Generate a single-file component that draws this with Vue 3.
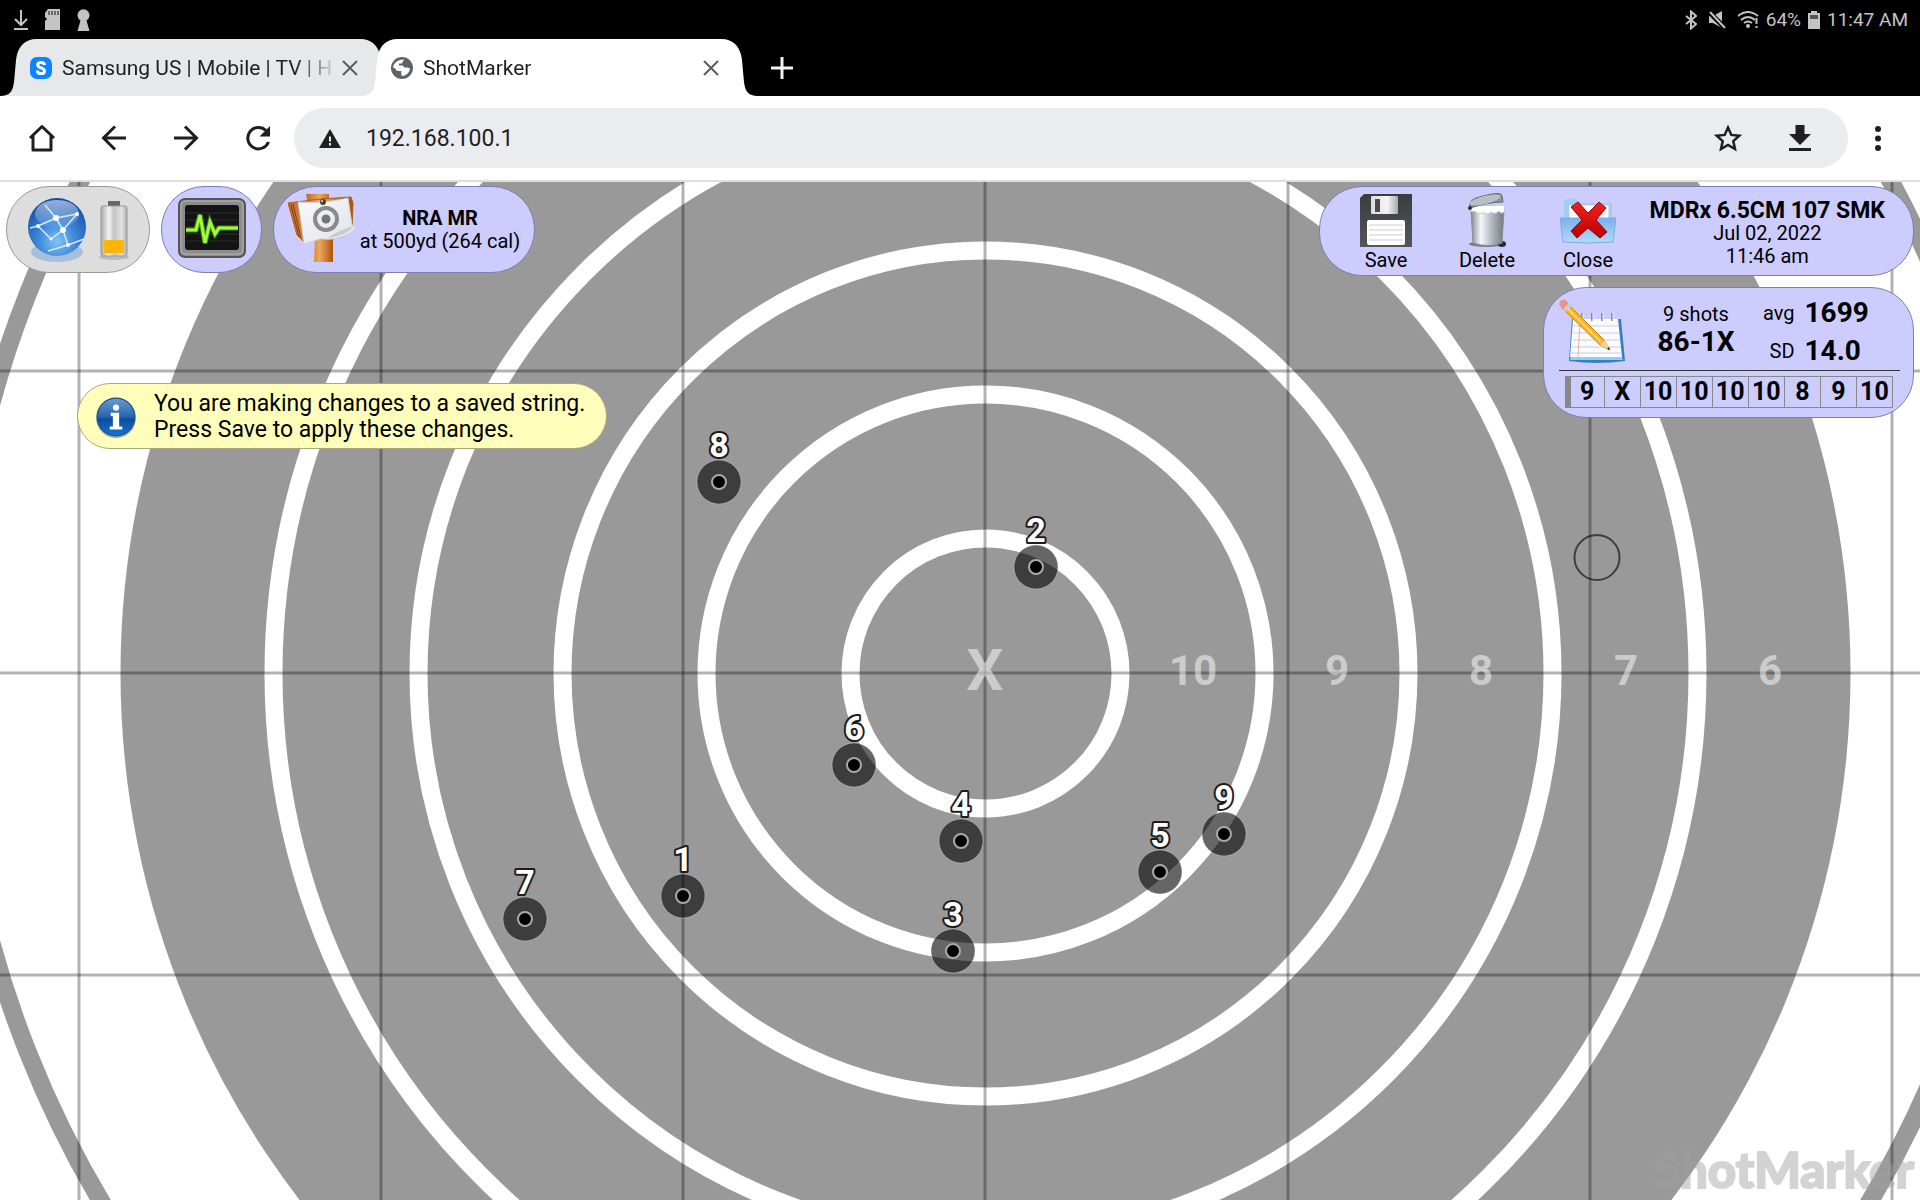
<script setup>
const tabs = [
  { title: 'Samsung US | Mobile | TV | H', icon: 'samsung', active: false },
  { title: 'ShotMarker', icon: 'globe', active: true },
]

const ringRadii = [135, 279, 423, 567, 712]
const ringLabels = [
  { text: '10', x: 1193 },
  { text: '9', x: 1337 },
  { text: '8', x: 1481 },
  { text: '7', x: 1626 },
  { text: '6', x: 1770 },
]
const gridX = [79, 381, 683, 985, 1288, 1590, 1892]
const gridY = [189, 491, 793]

const shots = [
  { n: 1, x: 683, y: 714 },
  { n: 2, x: 1036, y: 385 },
  { n: 3, x: 953, y: 769 },
  { n: 4, x: 961, y: 659 },
  { n: 5, x: 1160, y: 690 },
  { n: 6, x: 854, y: 583 },
  { n: 7, x: 525, y: 737 },
  { n: 8, x: 719, y: 300 },
  { n: 9, x: 1224, y: 652 },
]
const scores = ['9', 'X', '10', '10', '10', '10', '8', '9', '10']
</script>

<template>
  <div class="device">
    <header class="status">
      <div class="status-side">
        <svg width="14" height="22" viewBox="0 0 14 22" fill="none" stroke="#c4c4c4" stroke-width="2"><path d="M7 1v15M1 10l6 6 6-6M0 20h14" /></svg>
        <svg width="15" height="22" viewBox="0 0 15 22"><path d="M3 0h12v21H0v-9l2-2-2-2V4z" fill="#c4c4c4" /><path d="M4 2v4M7 2v4M10 2v4M13 2v4" stroke="#111" stroke-width="1" /></svg>
        <svg width="13" height="22" viewBox="0 0 13 22"><path d="M3.500 11.500A6 6 0 1 1 9.500 11.500L12.500 22H.500z" fill="#c4c4c4" /></svg>
      </div>
      <div class="status-side right">
        <svg width="12" height="20" viewBox="0 0 12 20" fill="none" stroke="#c4c4c4" stroke-width="2"><path d="M1 6l10 8-5 4.500V1.500L11 6 1 14" /></svg>
        <svg width="17" height="18" viewBox="0 0 17 18"><path d="M0 5h4l9-5v17l-9-5H0z" fill="#c4c4c4" /><path d="M0 1l16 16" stroke="#000" stroke-width="5" /><path d="M1 1l15 16" stroke="#c4c4c4" stroke-width="2" /></svg>
        <svg width="21" height="18" viewBox="0 0 21 18" fill="none" stroke="#c4c4c4" stroke-width="2"><path d="M0 5Q10-3 20 5M3 9q7-6 14 0M6 12q4-3 8 0" /><circle cx="10" cy="15" r="1" fill="#c4c4c4" /><path d="M18.500 7v6M18.500 15v2" /></svg>
        <span>64%</span>
        <svg width="12" height="18" viewBox="0 0 12 18"><path d="M3 0h6v2h3v16H0V2h3z" fill="#c4c4c4" /><path d="M2 4h8v4H2z" fill="#555" /></svg>
        <span>11:47 AM</span>
      </div>
    </header>

    <nav class="tabs" aria-label="Open tabs">
      <div v-for="tab in tabs" :key="tab.title" class="tab" :class="{ active: tab.active }">
        <svg class="tab-shape" viewBox="0 0 394 57" preserveAspectRatio="none" aria-hidden="true"><path d="M0 57C10 57 13 52 14 42L16 20C18 6 26 0 36 0H358C368 0 376 6 378 20L380 42C381 52 384 57 394 57Z" /></svg>
        <svg v-if="tab.icon === 'samsung'" class="favicon" viewBox="0 0 22 22"><rect width="22" height="22" rx="7" fill="#0a84ff" /><path d="M14.500 8.200C14.300 5.900 13 5.400 11 5.400S7.700 6.300 7.700 8c0 3.500 6.800 2.200 6.800 5.900 0 1.800-1.500 2.700-3.500 2.700s-3.600-.700-3.600-3.200" fill="none" stroke="#fff" stroke-width="3" /></svg>
        <svg v-else class="favicon" viewBox="0 0 22 22"><circle cx="11" cy="11" r="11" fill="#5f6368" /><path d="M13 2.500c1 2-2 2-2 4H8v2c2 0 5-.500 5 2h3.500c1 0 2.500 1 2.500 1.500-1 4-4 7-8.500 7 .500-3-1-3 0-5H7c-2 0-2-3-5-3.500C2.500 6 7 2 13 2.500z" fill="#fff" /><path d="M13 2l-1 3 4 0 1 4h3l-2-5z" fill="#5f6368" /></svg>
        <a href="#" class="tab-title">{{ tab.title }}</a>
        <button class="plain" :aria-label="'Close ' + tab.title"><svg width="16" height="16" viewBox="0 0 16 16" fill="none" stroke="#5a5c5f" stroke-width="2"><path d="M1 1l14 14M15 1L1 15" /></svg></button>
      </div>
      <button class="plain new-tab" aria-label="New tab"><svg width="22" height="22" viewBox="0 0 22 22" stroke="#f1f3ee" stroke-width="3"><path d="M11 0v22M0 11h22" /></svg></button>
    </nav>

    <div class="toolbar">
      <button class="plain tool" aria-label="Home"><svg width="28" height="28" viewBox="0 0 28 28" fill="none" stroke="#1f1f1f" stroke-width="3"><path d="M2 14L14 2.500 26 14M5 12v14h18V12" stroke-linejoin="round" /></svg></button>
      <button class="plain tool" aria-label="Back"><svg width="26" height="26" viewBox="0 0 26 26" fill="none" stroke="#1f1f1f" stroke-width="3"><path d="M25 13H3M14 1.500L2.500 13 14 24.500" /></svg></button>
      <button class="plain tool" aria-label="Forward"><svg width="26" height="26" viewBox="0 0 26 26" fill="none" stroke="#1f1f1f" stroke-width="3"><path d="M1 13h22M12 1.500L23.500 13 12 24.500" /></svg></button>
      <button class="plain tool" aria-label="Reload"><svg width="26" height="26" viewBox="0 0 26 26"><path d="M21 5.500A10.700 10.700 0 1 0 23.500 17" fill="none" stroke="#1f1f1f" stroke-width="3" /><path d="M25 1v10.500H14.500z" fill="#1f1f1f" /></svg></button>
      <div class="omnibox">
        <svg width="22" height="19" viewBox="0 0 22 19"><path d="M11 0l11 19H0z" fill="#1f1f1f" /><path d="M11 7.500v5M11 14v2.500" stroke="#ebecf0" stroke-width="2" /></svg>
        <input type="text" value="192.168.100.1" aria-label="Address" />
        <button class="plain tool" aria-label="Bookmark"><svg width="30" height="28" viewBox="0 0 30 28"><path d="M15 3.500l3.300 7.400 8 .800-6 5.400 1.700 7.900L15 21l-7 4 1.700-7.900-6-5.400 8-.800z" fill="none" stroke="#1f1f1f" stroke-width="2.500" /></svg></button>
        <button class="plain tool" aria-label="Downloads"><svg width="22" height="26" viewBox="0 0 22 26"><path d="M6.500 0h9v9H22L11 20 0 9h6.500zM0 23h22v3H0z" fill="#1f1f1f" /></svg></button>
      </div>
      <button class="plain menu" aria-label="Menu"><svg width="6" height="25" viewBox="0 0 6 25" fill="#1f1f1f"><circle cx="3" cy="3" r="3" /><circle cx="3" cy="12.500" r="3" /><circle cx="3" cy="22" r="3" /></svg></button>
    </div>

    <main class="range">
      <svg class="target" viewBox="0 0 1920 1018" preserveAspectRatio="xMidYMid slice">
        <circle cx="985.500" cy="491" r="1030" fill="none" stroke="#999" stroke-width="18" />
        <circle cx="985.500" cy="491" r="865" fill="#999" />
        <circle v-for="r in ringRadii" :key="r" cx="985.500" cy="491.500" :r="r" fill="none" stroke="#fff" stroke-width="18" />
        <g stroke="#000" stroke-opacity=".3" stroke-width="3">
          <path v-for="x in gridX" :key="x" :d="`M${x} 0V1018`" />
          <path v-for="y in gridY" :key="y" :d="`M0 ${y}H1920`" />
        </g>
        <g class="ring-labels">
          <text class="center-label" x="985" y="508">X</text>
          <text v-for="l in ringLabels" :key="l.text" :x="l.x" y="503">{{ l.text }}</text>
        </g>
        <circle cx="1597" cy="375.500" r="22.500" fill="none" stroke="#000" stroke-opacity=".6" stroke-width="2" />
        <g v-for="s in shots" :key="s.n">
          <circle :cx="s.x" :cy="s.y" r="22" fill="#000" fill-opacity=".6" stroke="#fff" stroke-opacity=".3" />
          <circle :cx="s.x" :cy="s.y" r="7" fill="#000" stroke="#aaa" stroke-width="2" />
          <text class="shot-number" :x="s.x" :y="s.y - 25">{{ s.n }}</text>
        </g>
        <text class="watermark" x="1914" y="1006">ShotMarker</text>
      </svg>

      <div class="hud">
        <div class="hud-left">
          <div class="pills">
            <button class="pill connection" aria-label="Connection">
              <svg width="60" height="66" viewBox="0 0 60 66">
                <defs>
                  <radialGradient id="orb" cx=".5" cy=".75" r=".75"><stop offset="0" stop-color="#7fc4f5" /><stop offset=".45" stop-color="#3b86d8" /><stop offset="1" stop-color="#1348a4" /></radialGradient>
                  <linearGradient id="orbShine" x1="0" y1="0" x2="0" y2="1"><stop offset="0" stop-color="#fff" stop-opacity=".55" /><stop offset="1" stop-color="#fff" stop-opacity=".05" /></linearGradient>
                </defs>
                <ellipse cx="30" cy="55" rx="26" ry="10" fill="#8fb2d8" opacity=".7" />
                <circle cx="30" cy="30" r="29" fill="url(#orb)" />
                <ellipse cx="30" cy="17" rx="22" ry="14" fill="url(#orbShine)" />
                <g fill="none" stroke="#e2f2ff" stroke-width="1.500" opacity=".9"><path d="M3 31L11 29 29 21 50 17M29 21L36 33 41 48 21 54M18 8l11 13M36 33L24 42M36 33L50 17M41 48L57 42M11 29l13 13" /></g>
                <g fill="#fff"><circle cx="29" cy="21" r="3" /><circle cx="36" cy="33" r="3" /><circle cx="11" cy="29" r="2" /><circle cx="50" cy="17" r="2" /><circle cx="41" cy="48" r="2" /><circle cx="24" cy="42" r="1.500" /></g>
              </svg>
              <svg width="30" height="60" viewBox="0 0 30 60">
                <defs><linearGradient id="cell"><stop offset="0" stop-color="#aaa" /><stop offset=".3" stop-color="#f2f2f2" /><stop offset=".5" stop-color="#c3c3c3" /><stop offset=".8" stop-color="#e2e2e2" /><stop offset="1" stop-color="#aaa" /></linearGradient></defs>
                <ellipse cx="15" cy="57" rx="15" ry="3" fill="#bbb" />
                <rect x="9" y="1" width="12" height="6" fill="#666" />
                <rect x="2" y="6" width="26" height="50" rx="2" fill="url(#cell)" stroke="#999" />
                <rect x="5" y="40" width="20" height="13" fill="#fdb605" />
              </svg>
            </button>
            <button class="pill monitor" aria-label="Monitor">
              <svg width="68" height="64" viewBox="0 0 68 64">
                <rect x="1" y="1" width="66" height="58" rx="6" fill="#8d8d8d" stroke="#555" stroke-width="2" />
                <rect x="3" y="3" width="62" height="53" rx="4" fill="none" stroke="#b5b5b5" stroke-width="1" />
                <rect x="7" y="7" width="54" height="45" rx="3" fill="#141414" />
                <path d="M8 15h52M8 22h52M8 29h52M8 36h52M8 43h52" stroke="#2c2c2c" />
                <path d="M8 32h10l4-15 5 28 5-21 5 12 4-6h19" fill="none" stroke="#3e8c16" stroke-width="5" />
                <path d="M8 32h10l4-15 5 28 5-21 5 12 4-6h19" fill="none" stroke="#a6f83e" stroke-width="3" />
              </svg>
            </button>
            <button class="pill face">
              <svg width="68" height="72" viewBox="0 0 68 72">
                <defs>
                  <linearGradient id="wood"><stop offset="0" stop-color="#bd6a24" /><stop offset=".5" stop-color="#eba85c" /><stop offset="1" stop-color="#a9520f" /></linearGradient>
                  <linearGradient id="sheet" x1="0" y1="0" x2="1" y2="1"><stop offset="0" stop-color="#fafafa" /><stop offset=".8" stop-color="#e4e7ec" /><stop offset="1" stop-color="#fff" /></linearGradient>
                </defs>
                <path d="M18 0h23v10H20zM27 42h18v26H26z" fill="url(#wood)" />
                <path d="M0 9l33-4 30-2 2 6-1 28-10 6-39 4-6-6z" fill="url(#wood)" stroke="#ae5c1b" />
                <path d="M3 11l8 32M5 10l8 34" stroke="#8a3d0a" fill="none" />
                <path d="M10 8q24 2 50-4l4 27q5 2 2 5-12 11-34 9l-16 5q-3-24-6-42z" fill="url(#sheet)" stroke="#cdd1d6" />
                <path d="M39 44q14-9 27-12-8 10-27 12z" fill="#c8ccd2" />
                <circle cx="38" cy="25" r="11" fill="none" stroke="#8a8a8a" stroke-width="4" /><circle cx="38" cy="25" r="4.500" fill="#777" />
                <circle cx="35" cy="8" r="3" fill="#444" /><circle cx="34" cy="7" r="1" fill="#ddd" />
              </svg>
              <span class="lines"><strong>NRA MR</strong><span>at 500yd (264 cal)</span></span>
            </button>
          </div>
          <p class="notice" role="status">
            <svg width="40" height="42" viewBox="0 0 38 40">
              <defs><linearGradient id="info" x1="0" y1="0" x2="0" y2="1"><stop offset="0" stop-color="#6d9bd0" /><stop offset=".5" stop-color="#2664ac" /><stop offset=".55" stop-color="#0b4d9e" /><stop offset="1" stop-color="#1873cf" /></linearGradient></defs>
              <circle cx="19" cy="21" r="19" fill="#687d9b" opacity=".6" /><circle cx="19" cy="20" r="18" fill="url(#info)" stroke="#174b8c" />
              <circle cx="19" cy="11" r="3" fill="#fff" /><path d="M14 16h8v13h3v3H13v-3h3V19h-2z" fill="#fff" />
            </svg>
            <span>You are making changes to a saved string.<br />Press Save to apply these changes.</span>
          </p>
        </div>

        <div class="hud-right">
          <section class="pill session">
            <button class="plain action">
              <svg width="52" height="53" viewBox="0 0 52 53">
                <defs>
                  <linearGradient id="disk" x1="0" y1="0" x2="0" y2="1"><stop offset="0" stop-color="#3b3c3f" /><stop offset="1" stop-color="#55565a" /></linearGradient>
                  <linearGradient id="shutter"><stop offset="0" stop-color="#ddd" /><stop offset=".6" stop-color="#f5f5f5" /><stop offset="1" stop-color="#aaa" /></linearGradient>
                </defs>
                <path d="M4 0h48v53H0V4z" fill="url(#disk)" /><rect x="11" y="2" width="27" height="18" rx="1" fill="url(#shutter)" /><rect x="15" y="5" width="5" height="13" fill="#4a4a4d" />
                <rect x="7" y="26" width="38" height="25" rx="2" fill="#fff" /><path d="M9 31h34M9 36h34M9 41h34M9 46h34" stroke="#ccc" />
              </svg>
              Save
            </button>
            <button class="plain action">
              <svg width="40" height="54" viewBox="0 0 40 54">
                <defs><linearGradient id="can"><stop offset="0" stop-color="#84888f" /><stop offset=".3" stop-color="#f5f7fa" /><stop offset=".55" stop-color="#c2c7ce" /><stop offset="1" stop-color="#73777f" /></linearGradient></defs>
                <ellipse cx="20" cy="51" rx="18" ry="3" fill="#777b8b" /><ellipse cx="35" cy="51" rx="4" ry="3" fill="#272a30" />
                <path d="M4 17h33l-2 33q-14 5-29 0z" fill="url(#can)" stroke="#888c94" />
                <path d="M4 13l33-1 1 6q-4 4-6 0-4 4-8 1-4 4-8 0-4 4-8-1-4 2-5-2z" fill="#fff" stroke="#c5c8cd" />
                <path d="M3 15Q0 6 16 3q19-5 19 0l1 6Q22 9 3 15z" fill="#8b949c" stroke="#60686f" /><ellipse cx="18" cy="7" rx="16" ry="4" fill="#b7bfc5" transform="rotate(-14 18 7)" />
                <circle cx="3" cy="15" r="2" fill="#333" />
              </svg>
              Delete
            </button>
            <button class="plain action">
              <svg width="56" height="46" viewBox="0 0 56 46">
                <defs><linearGradient id="folder" x1="0" y1="0" x2="0" y2="1"><stop offset="0" stop-color="#7bb0ed" /><stop offset="1" stop-color="#b5dafb" /></linearGradient><linearGradient id="cross" x1="0" y1="0" x2="0" y2="1"><stop offset="0" stop-color="#f32020" /><stop offset="1" stop-color="#bb0000" /></linearGradient></defs>
                <path d="M4 2q6-3 14 0l3 3h31v37H4z" fill="#a1ccf5" /><path d="M9 7h40v20H9z" fill="#fff" stroke="#bac9db" />
                <path d="M0 20h56l-3 24q-24 2-50 0z" fill="url(#folder)" stroke="#7eade1" />
                <path d="M18 4l10 11L39 4l7 6-10 12 11 12-7 6-12-10-11 10-6-7 11-11L11 9z" fill="url(#cross)" stroke="#8a0c0c" />
              </svg>
              Close
            </button>
            <div class="lines session-text">
              <strong class="name">MDRx 6.5CM 107 SMK</strong><span>Jul 02, 2022</span><span>11:46 am</span>
            </div>
          </section>

          <section class="pill stats">
            <div class="stats-top">
              <svg width="66" height="66" viewBox="0 0 66 66">
                <path d="M13 20h49l4 42q-28 4-56 0z" fill="#377fc0" /><path d="M12 58h51l1 3H11z" fill="#8cd0f4" /><path d="M14 20h45l4 38H11z" fill="#fbfcff" />
                <path d="M15 27h45M14 34h47M14 41h47M13 48h49M12 54h51" stroke="#c5ccdc" /><path d="M21 22l-2 36" stroke="#f0a9aa" />
                <g stroke="#888b99" stroke-width="2"><path d="M23 14v8M33 14v8M43 14v8M53 14v8" /></g><g stroke="#eee"><path d="M24 14v8M34 14v8M44 14v8M54 14v8" /></g>
                <path d="M7 3l38 38 6 10-10-5L2 8z" fill="#fbb020" stroke="#d38a12" /><path d="M6 7l36 36" stroke="#ffd568" stroke-width="2" /><path d="M0 5q2-6 7-4l3 4-6 6z" fill="#ee9187" /><path d="M4 10l6-6 3 3-6 6z" fill="#ccc" /><path d="M41 46l5-5 5 10z" fill="#edd3a2" /><path d="M48 50l2-2 1 3z" fill="#222" />
              </svg>
              <div class="tally"><span>9 shots</span><strong>86-1X</strong></div>
              <dl class="figures"><dt>avg</dt><dd>1699</dd><dt>SD</dt><dd>14.0</dd></dl>
            </div>
            <table class="scores" aria-label="Scores"><tbody><tr><td v-for="(s, i) in scores" :key="i">{{ s }}</td></tr></tbody></table>
          </section>
        </div>
      </div>
    </main>
  </div>
</template>

<style>
body { margin: 0; background: #fff; }
</style>

<style scoped>
.device { display: flex; flex-direction: column; min-height: 100vh; font-family: Roboto, "Liberation Sans", sans-serif; color: #000; white-space: nowrap; }
svg { flex: none; }
.plain { border: 0; padding: 0; background: none; font: inherit; color: inherit; display: flex; align-items: center; justify-content: center; }

.status { height: 39px; background: #000; color: #c4c4c4; display: flex; justify-content: space-between; padding: 0 12px 0 14px; font-size: 19px; }
.status-side { display: flex; align-items: center; gap: 17px; }
.status-side.right { gap: 7px; }
.status-side.right svg:nth-child(-n+2) { margin-right: 5px; }

.tabs { display: flex; height: 57px; background: #000; }
.tab { position: relative; box-sizing: border-box; width: 397px; padding: 0 39px 0 30px; display: flex; align-items: center; }
.tab + .tab { margin-left: -36px; }
.tab-shape { position: absolute; inset: 0; width: 100%; height: 100%; fill: #e7e8ea; }
.tab.active .tab-shape { fill: #fff; }
.favicon { position: relative; width: 22px; height: 22px; }
.tab-title { position: relative; flex: 1; min-width: 0; margin: 0 4px 0 10px; color: #1f1f1f; font-size: 21px; line-height: 28px; text-decoration: none; -webkit-mask-image: linear-gradient(to right, #000 84%, transparent); mask-image: linear-gradient(to right, #000 84%, transparent); }
.tab .plain { position: relative; }
.new-tab { width: 48px; }

.toolbar { display: flex; align-items: center; height: 84px; padding: 0 18px 0 6px; border-bottom: 2px solid #dedede; background: #fff; }
.tool { width: 72px; height: 60px; flex: none; }
.omnibox { flex: 1; display: flex; align-items: center; height: 60px; padding: 0 12px 0 25px; border-radius: 30px; background: #ebecf0; }
.omnibox input { flex: 1; min-width: 0; margin-left: 25px; border: 0; padding: 0; background: none; outline: 0; font: 23px Roboto, "Liberation Sans", sans-serif; color: #1f1f1f; }
.menu { width: 48px; height: 60px; margin-left: 6px; }

.range { position: relative; flex: 1; overflow: hidden; }
.target { position: absolute; inset: 0; width: 100%; height: 100%; }
.ring-labels { fill: #fff; fill-opacity: .5; font-size: 42px; font-weight: 700; text-anchor: middle; }
.center-label { font-size: 58px; }
.shot-number { fill: #fff; stroke: #1c1c1c; stroke-width: 4px; paint-order: stroke; stroke-linejoin: round; font-size: 34px; font-weight: 700; text-anchor: middle; }
.watermark { fill: #a0a0a0; stroke: #a0a0a0; stroke-width: 2px; opacity: .45; font-family: Lato, sans-serif; font-weight: 900; font-size: 49px; text-anchor: end; }

.hud { position: relative; display: flex; justify-content: space-between; align-items: flex-start; padding: 4px 6px; font-size: 20px; line-height: 23px; }
.pills { display: flex; gap: 11px; }
.pill { box-sizing: border-box; border: 1px solid #7d7db0; border-radius: 43px; background: #ccccff; color: #000; font: inherit; display: flex; align-items: center; justify-content: center; }
.pills .pill { height: 87px; padding: 0; }
.pills .connection { width: 144px; gap: 12px; background: #ddd; border-color: #999; }
.pills .monitor { width: 101px; }
.pills .face { width: 262px; gap: 4px; }
.lines { display: flex; flex-direction: column; align-items: center; text-align: center; }
.notice { display: flex; align-items: center; box-sizing: border-box; width: 530px; height: 66px; margin: 110px 0 0 71px; padding: 2px 0 0 18px; gap: 18px; border: 1px solid #aaa77c; border-radius: 33px; background: #ffffbb; font-size: 23px; line-height: 26px; }

.hud-right { display: flex; flex-direction: column; align-items: flex-end; gap: 11px; }
.session { height: 90px; padding: 0 28px 0 16px; }
.action { width: 101px; height: 82px; flex-direction: column; justify-content: flex-end; }
.action svg { margin-bottom: 2px; }
.action:nth-child(3) svg { margin-bottom: 5px; }
.session-text { margin: 4px 0 0 11px; }
.name { font-size: 23px; }

.stats { width: 371px; height: 131px; flex-direction: column; justify-content: flex-start; align-items: stretch; padding: 6px 13px 0 15px; }
.stats-top { display: flex; align-items: center; height: 76px; border-bottom: 1px solid #333; }
.tally { width: 94px; margin: 0 0 4px 24px; display: flex; flex-direction: column; align-items: center; line-height: 24px; }
.tally strong { font-size: 28px; line-height: 32px; }
.figures { display: grid; grid-template-columns: auto auto; column-gap: 10px; align-items: center; margin: 0 0 0 20px; line-height: 38px; }
.figures dt { text-align: right; }
.figures dd { margin: 0; font-size: 28px; font-weight: 700; }
.scores { border-collapse: collapse; table-layout: fixed; width: 328px; height: 32px; margin: 5px 0 0 6px; border: 1px solid #888; border-left: 6px solid #888; }
.scores td { padding: 0; border: 1px solid #888; text-align: center; font-size: 25px; line-height: 30px; font-weight: 700; }
.scores td:first-child { border-left: 6px solid #888; }
</style>
